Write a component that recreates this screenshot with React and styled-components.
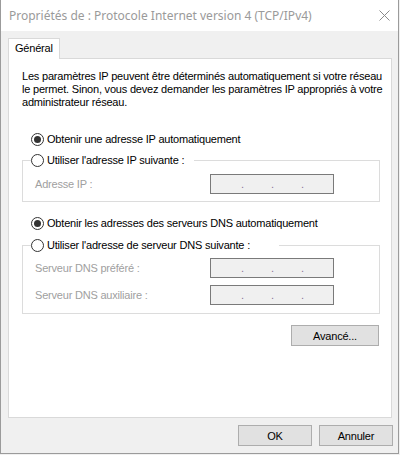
import React from 'react';
import styled, { createGlobalStyle } from 'styled-components';

const GlobalStyle = createGlobalStyle`
  html, body {
    margin: 0;
    padding: 0;
    background: #f0f0f0;
  }
  body {
    font-family: "Liberation Sans", Arial, sans-serif;
    font-size: 11px;
    letter-spacing: -0.2px;
    color: #000;
  }
`;

const Window = styled.div`
  width: 399px;
  height: 454px;
  box-sizing: border-box;
  border: 1px solid #9b9b9b;
  border-top: none;
  background: #f0f0f0;
  display: flex;
  flex-direction: column;
`;

const TitleBar = styled.div`
  height: 31px;
  flex: none;
  background: #fff;
  display: flex;
  align-items: center;
  justify-content: space-between;
  padding: 0 8px 0 8px;
`;

const Title = styled.span`
  font-family: "Noto Sans", "Open Sans", sans-serif;
  font-size: 12px;
  letter-spacing: 0;
  color: #9a9a9a;
`;

const Body = styled.div`
  flex: 1;
  padding: 7px 6px 0 7px;
  display: flex;
  flex-direction: column;
`;

const TabStrip = styled.div`
  display: flex;
  position: relative;
  z-index: 1;
  margin-bottom: -1px;
`;

const Tab = styled.div`
  width: 52px;
  height: 21px;
  box-sizing: border-box;
  border: 1px solid #d9d9d9;
  border-bottom: none;
  background: #fff;
  padding: 3px 0 0 6px;
`;

const Panel = styled.div`
  height: 360px;
  box-sizing: border-box;
  border: 1px solid #d9d9d9;
  background: #fff;
  padding: 11px 11px 0 13px;
  display: flex;
  flex-direction: column;
`;

const Description = styled.p`
  margin: 0;
  line-height: 13px;
  white-space: nowrap;
`;

const RadioRow = styled.label`
  display: flex;
  align-items: center;
  height: 16px;
  margin-top: ${p => p.$top ?? 0}px;
  padding-left: ${p => p.$indent ?? 9}px;
  gap: 3px;
`;

const Circle = styled.span`
  width: 13px;
  height: 13px;
  box-sizing: border-box;
  border: 1px solid #333;
  border-radius: 50%;
  background: #fff;
  display: flex;
  align-items: center;
  justify-content: center;
  &::after {
    content: '';
    width: 7px;
    height: 7px;
    border-radius: 50%;
    background: ${p => (p.$checked ? '#333' : 'transparent')};
  }
`;

const Group = styled.fieldset`
  margin: ${p => p.$top ?? 0}px 0 0 0;
  padding: ${p => p.$pt}px 0 ${p => p.$pb}px 12px;
  border: 1px solid #dcdcdc;
  min-width: 0;
  display: grid;
  grid-template-columns: 175px 124px;
  row-gap: 7px;
  align-items: center;
`;

const Legend = styled.legend`
  padding: 0 ${p => p.$gap ?? 10}px 0 0;
  margin-left: -4px;
`;

const FieldLabel = styled.span`
  color: #a0a0a0;
`;

const IpBox = styled.div`
  height: 20px;
  box-sizing: border-box;
  border: 1px solid #7a7a7a;
  background: #f0f0f0;
  display: flex;
  align-items: flex-end;
  padding: 0 0 3px 30px;
  gap: 28px;
  color: #8a7598;
  font-size: 11px;
  line-height: 11px;
`;

const Dot = styled.span`
  width: 2px;
`;

const Button = styled.button`
  width: ${p => p.$w ?? 74}px;
  height: 21px;
  box-sizing: border-box;
  border: 1px solid #adadad;
  background: #e1e1e1;
  font-family: "Liberation Sans", Arial, sans-serif;
  font-size: 11px;
  letter-spacing: -0.2px;
  color: #000;
  padding: 0;
`;

const AdvancedRow = styled.div`
  display: flex;
  justify-content: flex-end;
  margin-top: 11px;
  padding-right: 1px;
`;

const Footer = styled.div`
  display: flex;
  justify-content: flex-end;
  gap: 7px;
  padding: 7px 0 0 0;
  margin-right: -1px;
`;

const IpField = () => (
  <IpBox>
    <Dot>.</Dot>
    <Dot>.</Dot>
    <Dot>.</Dot>
  </IpBox>
);

const CloseIcon = () => (
  <svg width="11" height="11" viewBox="0 0 11 11">
    <path d="M0.5 0.5 L10.5 10.5 M10.5 0.5 L0.5 10.5" stroke="#8a8a8a" strokeWidth="1" fill="none" />
  </svg>
);

export default function App() {
  return (
    <>
      <GlobalStyle />
      <Window>
        <TitleBar>
          <Title>Propriétés de : Protocole Internet version 4 (TCP/IPv4)</Title>
          <CloseIcon />
        </TitleBar>
        <Body>
          <TabStrip>
            <Tab>Général</Tab>
          </TabStrip>
          <Panel>
            <Description>
              Les paramètres IP peuvent être déterminés automatiquement si votre réseau<br />
              le permet. Sinon, vous devez demander les paramètres IP appropriés à votre<br />
              administrateur réseau.
            </Description>
            <RadioRow $top={22}>
              <Circle $checked />
              Obtenir une adresse IP automatiquement
            </RadioRow>
            <Group $top={5} $pt={6} $pb={7}>
              <Legend $gap={10}>
                <RadioRow $indent={0}>
                  <Circle />
                  Utiliser l'adresse IP suivante :
                </RadioRow>
              </Legend>
              <FieldLabel>Adresse IP :</FieldLabel>
              <IpField />
            </Group>
            <RadioRow $top={13}>
              <Circle $checked />
              Obtenir les adresses des serveurs DNS automatiquement
            </RadioRow>
            <Group $top={6} $pt={5} $pb={8}>
              <Legend $gap={29}>
                <RadioRow $indent={0}>
                  <Circle />
                  Utiliser l'adresse de serveur DNS suivante :
                </RadioRow>
              </Legend>
              <FieldLabel>Serveur DNS préféré :</FieldLabel>
              <IpField />
              <FieldLabel>Serveur DNS auxiliaire :</FieldLabel>
              <IpField />
            </Group>
            <AdvancedRow>
              <Button $w={88}>Avancé...</Button>
            </AdvancedRow>
          </Panel>
          <Footer>
            <Button>OK</Button>
            <Button>Annuler</Button>
          </Footer>
        </Body>
      </Window>
    </>
  );
}
